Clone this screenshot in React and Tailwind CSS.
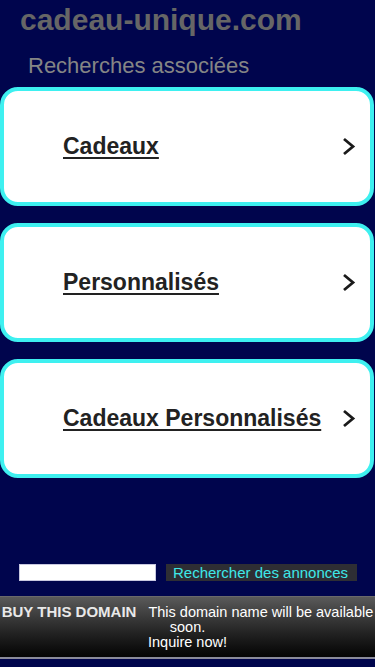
import React from 'react';

const links = ['Cadeaux', 'Personnalisés', 'Cadeaux Personnalisés'];

function Chevron() {
  return (
    <svg width="14" height="19" viewBox="0 0 14 19" className="shrink-0">
      <path d="M2 2 L11 9.5 L2 17" fill="none" stroke="#1a1a1a" strokeWidth="2.8" strokeLinecap="butt" />
    </svg>
  );
}

export default function App() {
  return (
    <div
      className="min-h-[667px] w-[375px] bg-[#00054d] flex flex-col"
      style={{ fontFamily: '"Liberation Sans", Arial, sans-serif' }}
    >
      {/* header */}
      <div className="pt-[2px] pl-[20px] text-[30px] leading-[36px] font-bold text-[#666666]">
        cadeau-unique.com
      </div>
      <div className="mt-[15px] pl-[28px] text-[22px] leading-[26px] text-[#858585]">
        Recherches associées
      </div>

      {/* related links */}
      <div className="mt-[8px] flex flex-col gap-[17px]">
        {links.map((l) => (
          <a
            key={l}
            href="#"
            className="w-[374px] h-[119px] bg-white border-[4px] border-[#3ef0f0] rounded-[18px] flex items-center justify-between pl-[59px] pr-[14px]"
          >
            <span className="text-[23px] font-bold text-[#222222] underline decoration-[2px] underline-offset-[3px]">
              {l}
            </span>
            <Chevron />
          </a>
        ))}
      </div>

      {/* search */}
      <div className="mt-[86px] flex items-center pl-[19px] gap-[10px]">
        <div className="w-[137px] h-[17px] bg-white border border-[#c8c8e0]" />
        <div className="w-[191px] h-[17px] bg-[#2e2e34] text-[#3ee8e8] text-[15px] leading-[17px] pl-[7px]">
          Rechercher des annonces
        </div>
      </div>

      {/* buy domain bar */}
      <div className="mt-[15px] h-[61px] bg-gradient-to-b from-[#5a5a5a] to-[#050505] border-t border-[#6a6a6a] text-center text-white text-[14.5px] leading-[15px] pt-[7px]">
        <span className="font-bold text-[15px] text-[#e8e8e8] mr-[12px]">BUY THIS DOMAIN</span>
        This domain name will be available soon.
        <br />
        Inquire now!
      </div>
      <div className="h-[2px] bg-[#8a8a9a]" />
      <div className="flex-1 bg-[#00054d]" />
    </div>
  );
}
